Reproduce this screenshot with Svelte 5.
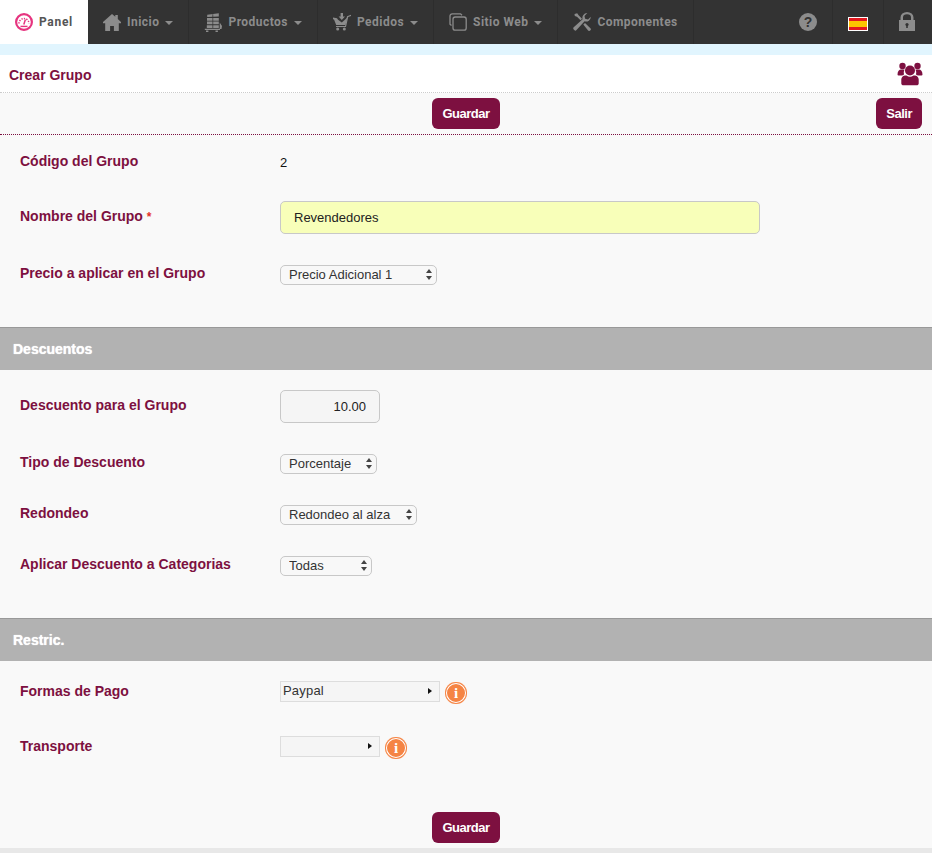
<script>
  let nombre = $state("Revendedores");
  let descuento = $state("10.00");
</script>

<nav class="topbar">
  <a class="tab active" href="#panel">
    <svg width="18" height="18" viewBox="0 0 18 18" fill="none" stroke="#e6347f">
      <circle cx="9" cy="9" r="7.900" stroke-width="2.200" />
      <path d="M4 10.500a5 5 0 0 1 10 0" stroke-width="1.500" stroke-dasharray="1.300 1.200" />
      <path d="M8.800 11.500 10.400 6.500" stroke-width="1.500" />
      <path d="M5.500 13.400h7" stroke-width="1.400" />
    </svg>
    <span>Panel</span>
  </a>
  <a class="tab" href="#inicio">
    <svg width="18" height="17" viewBox="0 0 18 17" fill="#8c8c8c">
      <path d="M9 0 12.300 2.800V1h2.500v4L18 8v1.300h-2.200V17h-4.900v-5H7.100v5H2.200V9.300H0V8z" />
    </svg>
    <span>Inicio</span><i class="caret"></i>
  </a>
  <a class="tab" href="#productos">
    <svg width="18" height="19" viewBox="0 0 18 19" fill="#8c8c8c">
      <path d="M3.200 1.800 14.800 0.300V3.400L3.200 4z" />
      <path d="M3 5H14.800V7.700H3zM3 8.600H14.800V11.300H3zM2.800 12.200H14.800V15H2.800z" />
      <path d="M8.500 1.200h.7v14h-.7z" fill="#333" />
      <path d="M15.700 9.500 18 13l-.5 3h-1.800zM0.800 15.800H16V17H0.800zM2 17.400h2.400V19H2zM11.500 17.400h2.400V19H11.500z" />
    </svg>
    <span>Productos</span><i class="caret"></i>
  </a>
  <a class="tab" href="#pedidos">
    <svg width="18" height="18" viewBox="0 0 18 18" fill="#8c8c8c">
      <path d="M7.600 0h2.400v3.400h2L8.800 7 5.600 3.400h2z" />
      <path d="M0 4.500l4 .8L5 6.800l3.800 2.800 3.400-3 1.200-1.400.8-.3-1.700 7.100H3.200L1 6.500 0 6.200z" />
      <path d="M14 3.200 18 1.800v1.300l-2.800 1L13 14H3v-1.100h9.100z" />
      <circle cx="4.700" cy="16" r="1.500" /><circle cx="11.300" cy="16" r="1.500" />
    </svg>
    <span>Pedidos</span><i class="caret"></i>
  </a>
  <a class="tab" href="#sitio">
    <svg width="18" height="18" viewBox="0 0 18 18" fill="none" stroke="#8c8c8c" stroke-width="1.300">
      <path d="M2.500 12.500 1 11.200V3a2.200 2.200 0 0 1 2.200-2.200h8.300L13 2.300" />
      <rect x="4" y="4" width="13.200" height="13.200" rx="2.200" />
    </svg>
    <span>Sitio Web</span><i class="caret"></i>
  </a>
  <a class="tab last" href="#componentes">
    <svg width="18" height="18" viewBox="0 0 18 18" fill="#8c8c8c">
      <path d="M1.500 1 4.200.2 5.600 2.300 9 5.700 7.500 7.300 4 3.800 1.800 3z" />
      <path d="M17.800 3.800a4.700 4.700 0 0 1-6.200 4.500L3.500 17.100a1.500 1.500 0 0 1-2.200 0l-.6-.7a1.500 1.500 0 0 1 0-2.100l8.900-8.100A4.700 4.700 0 0 1 14.300.1l-2.800 2.800.6 2.900 2.900.6z" />
      <path d="M10.300 11.500 12 9.900l5.400 5.300a1.500 1.500 0 0 1 0 2.100l-.2.200a1.500 1.500 0 0 1-2.100 0z" />
    </svg>
    <span>Componentes</span>
  </a>
  <div class="spacer"></div>
  <a class="side help-item" href="#ayuda"><span class="help">?</span></a>
  <a class="side flag-item" href="#idioma">
    <span class="flag"><i></i></span>
  </a>
  <a class="side lock-item" href="#salir">
    <svg width="16" height="19" viewBox="0 0 16 19" fill="#8c8c8c">
      <path d="M1.500 8V5.500a6.500 5.500 0 0 1 13 0V8H16v11H0V8zM4 8h8V5.500a4 3.300 0 0 0-8 0z" fill-rule="evenodd" />
      <circle cx="8" cy="12.500" r="1.600" fill="#333" /><path d="M7.200 13h1.600v3H7.200z" fill="#333" />
    </svg>
  </a>
</nav>

<div class="strip"></div>

<header class="title">
  <h1>Crear Grupo</h1>
  <svg width="26" height="26" viewBox="0 0 26 26" fill="#7d1040">
    <circle cx="5.500" cy="5" r="3.200" /><circle cx="20.500" cy="5" r="3.200" />
    <path d="M.500 13.500c0-3.500 1.800-5 3.500-5h3.500A7 7 0 0 0 7 13.800c-.8 0-1 .2-1.500.6H1.500a1 1 0 0 1-1-.9z" />
    <path d="M25.500 13.500c0-3.500-1.800-5-3.500-5h-3.500a7 7 0 0 1 .5 5.300c.8 0 1 .2 1.500.6h4a1 1 0 0 0 1-.9z" />
    <circle cx="13" cy="9.500" r="5" />
    <path d="M4.300 22.500v-4c0-2.200 1.700-4 3.800-4h1.400a5.800 5.800 0 0 0 7 0h1.400c2.100 0 3.800 1.800 3.800 4v4c0 1.200-1 1.800-2 1.800H6.300c-1 0-2-.6-2-1.800z" />
  </svg>
</header>

<div class="toolbar">
  <span></span>
  <button class="btn" type="button">Guardar</button>
  <button class="btn exit" type="button">Salir</button>
</div>

<form onsubmit={(e) => e.preventDefault()}>
  <section class="fields first">
    <div class="row code">
      <label for="codigo">Código del Grupo</label>
      <span id="codigo" class="value">2</span>
    </div>
    <div class="row">
      <label for="nombre">Nombre del Grupo <em>*</em></label>
      <input id="nombre" class="text" bind:value={nombre} />
    </div>
    <div class="row sel-row">
      <label for="precio">Precio a aplicar en el Grupo</label>
      <span class="select" style="width: 157px">
        <select id="precio"><option>Precio Adicional 1</option></select>
      </span>
    </div>
  </section>

  <h2 class="bar">Descuentos</h2>
  <section class="fields">
    <div class="row">
      <label for="descuento">Descuento para el Grupo</label>
      <input id="descuento" class="amount" bind:value={descuento} />
    </div>
    <div class="row sel-row">
      <label for="tipo">Tipo de Descuento</label>
      <span class="select" style="width: 97px">
        <select id="tipo"><option>Porcentaje</option></select>
      </span>
    </div>
    <div class="row sel-row">
      <label for="redondeo">Redondeo</label>
      <span class="select" style="width: 137px">
        <select id="redondeo"><option>Redondeo al alza</option></select>
      </span>
    </div>
    <div class="row sel-row">
      <label for="categorias">Aplicar Descuento a Categorias</label>
      <span class="select" style="width: 92px">
        <select id="categorias"><option>Todas</option></select>
      </span>
    </div>
  </section>

  <h2 class="bar">Restric.</h2>
  <section class="fields last">
    <div class="row picker-row">
      <span class="lbl">Formas de Pago</span>
      <div class="picker-wrap">
        <div class="picker" style="width: 160px">Paypal<i></i></div>
        <span class="info">i</span>
      </div>
    </div>
    <div class="row picker-row">
      <span class="lbl">Transporte</span>
      <div class="picker-wrap">
        <div class="picker" style="width: 100px"><i></i></div>
        <span class="info">i</span>
      </div>
    </div>
  </section>

  <div class="footer">
    <button class="btn" type="submit">Guardar</button>
  </div>
</form>
<div class="band"></div>

<style>
  :global(body) {
    background: #f9f9f9;
    font-family: "Liberation Sans", Arial, sans-serif;
    font-size: 13px;
    color: #222;
  }

  .topbar {
    display: flex;
    height: 44px;
    background: #333;
    font-family: Roboto, sans-serif;
    font-size: 12px;
    font-weight: 700;
    letter-spacing: 0.47px;
    color: #8c8c8c;
  }

  .topbar a {
    color: inherit;
    text-decoration: none;
  }

  .tab {
    display: flex;
    align-items: center;
    padding: 0 15px;
    border-right: 1px solid #2d2d2d;
  }

  .tab svg {
    margin-right: 6px;
    flex: none;
  }

  .tab.active {
    width: 88px;
    box-sizing: border-box;
    background: #fff;
    color: #555;
    border-right: 0;
    letter-spacing: 0.7px;
  }

  .caret {
    margin-left: 6px;
    margin-top: 2px;
    border-left: 4px solid transparent;
    border-right: 4px solid transparent;
    border-top: 4px solid #8c8c8c;
  }

  .spacer {
    flex: 1;
  }

  .side {
    display: flex;
    align-items: center;
    justify-content: center;
    box-sizing: border-box;
    width: 50px;
    border-right: 1px solid #2d2d2d;
  }

  .side.lock-item {
    width: 48px;
    padding-right: 2px;
    padding-bottom: 2px;
    border-right: 0;
  }

  .help-item {
    padding-left: 1px;
  }

  .side.flag-item {
    width: 51px;
    padding-top: 4px;
  }

  .help {
    width: 18px;
    height: 18px;
    border-radius: 50%;
    background: #8c8c8c;
    color: #333;
    font-family: "Liberation Sans", sans-serif;
    font-size: 14px;
    font-weight: 700;
    line-height: 18px;
    letter-spacing: 0;
    text-align: center;
  }

  .flag {
    display: block;
    box-sizing: border-box;
    width: 20px;
    height: 14px;
    border: 1px solid #fff;
    background: #e2181f;
    padding: 3px 0;
  }

  .flag i {
    display: block;
    height: 6px;
    background: #fcc400;
  }

  .strip {
    height: 11px;
    background: #e1f5fe;
  }

  .title {
    display: flex;
    align-items: center;
    justify-content: space-between;
    box-sizing: border-box;
    height: 38px;
    padding: 2px 9px 0;
    background: #fff;
    border-bottom: 1px dotted #ccc;
  }

  .title svg {
    margin-bottom: 2px;
  }

  h1 {
    margin: 0;
    font-size: 14px;
    font-weight: 700;
    color: #7d1040;
  }

  .toolbar {
    display: grid;
    grid-template-columns: 1fr auto 1fr;
    align-items: center;
    height: 41px;
    padding: 0 10px;
    border-bottom: 1px dotted #7d1040;
  }

  .btn {
    height: 31px;
    padding: 0 10px;
    border: 0;
    border-radius: 6px;
    background: #7d1040;
    color: #fff;
    font-family: inherit;
    font-size: 13px;
    font-weight: 700;
    letter-spacing: -0.5px;
  }

  .exit {
    justify-self: end;
  }

  .fields {
    display: flex;
    flex-direction: column;
    gap: 31px;
    padding: 20px 0 42px 20px;
  }

  .fields.first {
    padding-top: 18px;
  }

  .fields.last {
    padding-bottom: 0;
  }

  .row {
    display: grid;
    grid-template-columns: 260px 1fr;
    align-items: center;
  }

  .row.code {
    height: 17px;
  }

  label,
  .lbl {
    margin-bottom: 3px;
    font-size: 14px;
    font-weight: 700;
    line-height: 16px;
    color: #7d1040;
  }

  .code label {
    margin-bottom: 2px;
  }

  .sel-row label {
    align-self: start;
    margin-bottom: 0;
  }

  label em {
    font-style: normal;
    font-size: 12px;
    color: #e5332a;
  }

  .value {
    margin-top: 1px;
    color: #111;
  }

  input {
    box-sizing: border-box;
    height: 33px;
    border: 1px solid #c8c8c8;
    border-radius: 5px;
    font-family: inherit;
    font-size: 13px;
    color: #222;
    outline: none;
  }

  .text {
    width: 480px;
    padding: 0 13px;
    background: #f8ffb9;
  }

  .amount {
    width: 100px;
    padding: 0 13px;
    text-align: right;
    background: #f5f5f5;
  }

  .select {
    position: relative;
    display: block;
    height: 20px;
  }

  .select select {
    appearance: none;
    box-sizing: border-box;
    display: block;
    width: 100%;
    height: 20px;
    padding: 0 18px 2px 8px;
    border: 1px solid #c8c8c8;
    border-radius: 5px;
    background: #f8f8f8;
    font-family: inherit;
    font-size: 13px;
    color: #333;
  }

  .select::before,
  .select::after {
    content: "";
    position: absolute;
    right: 5px;
    border-left: 3px solid transparent;
    border-right: 3px solid transparent;
    pointer-events: none;
  }

  .select::before {
    top: 4px;
    border-bottom: 4px solid #444;
  }

  .select::after {
    top: 11px;
    border-top: 4px solid #444;
  }

  .picker-row {
    height: 24px;
  }

  .picker-row .lbl {
    margin-bottom: 4px;
  }

  .picker-wrap {
    display: flex;
    align-items: flex-start;
    gap: 5px;
    height: 24px;
  }

  .picker {
    position: relative;
    box-sizing: border-box;
    height: 21px;
    padding-left: 2px;
    border: 1px solid #ddd;
    background: #f5f5f5;
    font-size: 13px;
    line-height: 18px;
    letter-spacing: 0.2px;
    color: #333;
  }

  .picker i {
    position: absolute;
    right: 7px;
    top: 6px;
    border-top: 3.500px solid transparent;
    border-bottom: 3.500px solid transparent;
    border-left: 4px solid #111;
  }

  .info {
    box-sizing: border-box;
    width: 22px;
    height: 22px;
    margin-top: 1px;
    border-radius: 50%;
    background: #f58444;
    box-shadow: inset 0 0 0 1px #f58444, inset 0 0 0 2px #fff;
    color: #fff;
    font-family: "Liberation Serif", serif;
    font-size: 15px;
    font-weight: 700;
    line-height: 22px;
    text-align: center;
  }

  .footer {
    display: flex;
    justify-content: center;
    padding: 52px 0 5px;
  }

  .bar {
    box-sizing: border-box;
    height: 43px;
    margin: 0;
    padding: 0 13px;
    border-top: 1px solid #999;
    background: #b2b2b2;
    font-size: 14px;
    font-weight: 700;
    line-height: 42px;
    color: #fff;
    text-shadow: 0 0 1px #fff;
  }

  .band {
    height: 5px;
    background: #e8e8e8;
  }
</style>
